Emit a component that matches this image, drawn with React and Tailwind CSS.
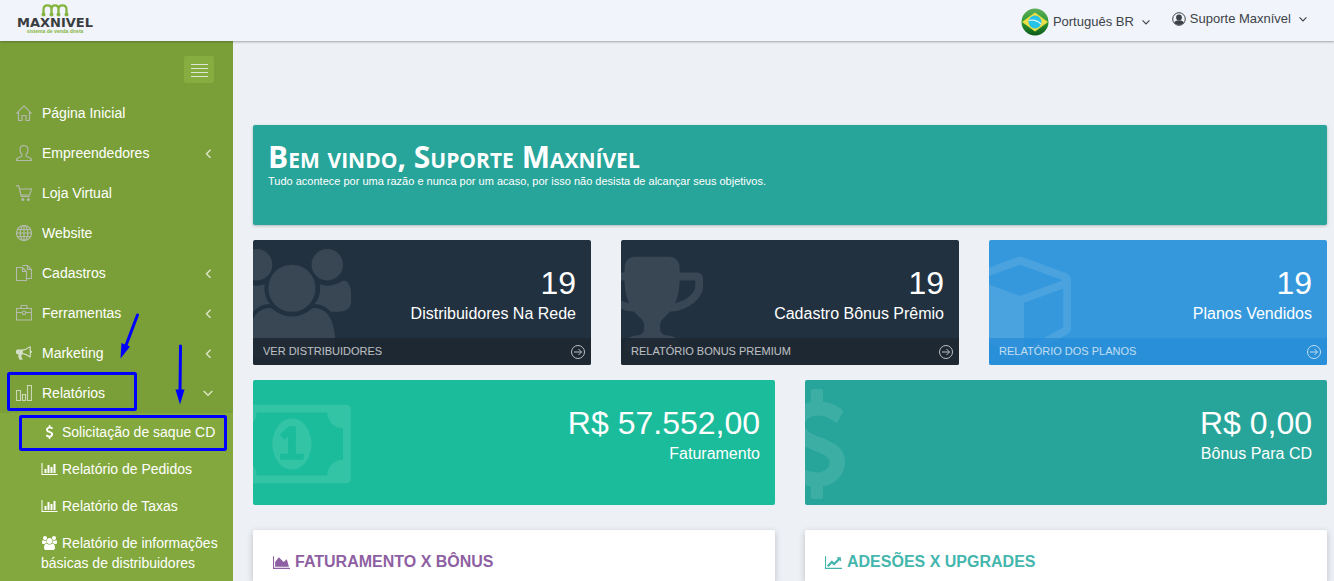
import React from 'react';

const FA_PATHS = {
  users: {
    box: '-64 0 1920 1792',
    d: 'M529 896q-162 5-265 128h-134q-82 0-138-40.5t-56-118.5q0-353 124-353 6 0 43.5 21t97.5 42.5 119 21.5q67 0 133-23-5 37-5 66 0 159 93 256zm1071 637q0 120-73 189.5t-194 69.5h-874q-121 0-194-69.5t-73-189.5q0-53 3.5-103.5t14-109 26.5-108.5 43-97.5 62-81 85.5-53.5 111.5-20q10 0 43 21.5t73 48 107 48 135 21.5 135-21.5 107-48 73-48 43-21.5q61 0 111.5 20t85.5 53.5 62 81 43 97.5 26.5 108.5 14 109 3.5 103.5zm-1024-1277q0 106-75 181t-181 75-181-75-75-181 75-181 181-75 181 75 75 181zm704 384q0 159-112.5 271.5t-271.5 112.5-271.5-112.5-112.5-271.5 112.5-271.5 271.5-112.5 271.5 112.5 112.5 271.5zm576 225q0 78-56 118.5t-138 40.5h-134q-103-123-265-128 93-97 93-256 0-29-5-66 66 23 133 23 59 0 119-21.5t97.5-42.5 43.5-21q124 0 124 353zm-128-609q0 106-75 181t-181 75-181-75-75-181 75-181 181-75 181 75 75 181z',
  },
  trophy: {
    box: '64 0 1664 1792',
    d: 'M522 883q-74-162-74-371h-256v96q0 78 94.5 162t235.5 113zm1078-275v-96h-256q0 209-74 371 141-29 235.5-113t94.5-162zm128-128v128q0 71-41.5 143t-112 130-173 97.5-215.5 44.5q-42 54-95 95-38 34-52.5 72.5t-14.5 89.5q0 54 30.5 91t97.5 37q75 0 133.5 45.5t58.5 114.5v64q0 14-9 23t-23 9h-832q-14 0-23-9t-9-23v-64q0-69 58.5-114.5t133.5-45.5q67 0 97.5-37t30.5-91q0-51-14.5-89.5t-52.5-72.5q-53-41-95-95-113-5-215.5-44.5t-173-97.5-112-130-41.5-143v-128q0-40 28-68t68-28h288v-96q0-66 47-113t113-47h576q66 0 113 47t47 113v96h288q40 0 68 28t28 68z',
  },
  cube: {
    box: '0 0 1664 1792',
    d: 'M896 1629l640-349v-636l-640 233v752zm-64-865l698-254-698-254-698 254zm832-252v768q0 35-18 65t-49 47l-704 384q-28 16-61 16t-61-16l-704-384q-31-17-49-47t-18-65v-768q0-40 23-73t61-47l704-256q22-8 44-8t44 8l704 256q38 14 61 47t23 73z',
  },
  money: {
    box: '0 0 1920 1792',
    d: 'M768 1152h384v-96h-128v-448h-114l-148 137 77 80q42-37 55-57h2v288h-128v96zm512-256q0 70-21 142t-59.5 134-101.5 101-138 39-138-39-101.5-101-59.5-134-21-142 21-142 59.5-134 101.5-101 138-39 138 39 101.5 101 59.5 134 21 142zm512 256v-512q-106 0-181-75t-75-181h-1152q0 106-75 181t-181 75v512q106 0 181 75t75 181h1152q0-106 75-181t181-75zm128-832v1152q0 26-19 45t-45 19h-1792q-26 0-45-19t-19-45v-1152q0-26 19-45t45-19h1792q26 0 45 19t19 45z',
  },
  dollar: {
    box: '384 0 1024 1792',
    d: 'M1362 1185q0 153-99.5 263.5t-258.5 136.5v175q0 14-9 23t-23 9h-135q-13 0-22.5-9.5t-9.5-22.5v-175q-66-9-127.5-31t-101.5-44.5-74-48-46.5-37.5-17.5-18q-17-21-2-41l103-135q7-10 23-12 15-2 24 9l2 2q113 99 243 125 37 8 74 8 81 0 142.5-43t61.5-122q0-28-15-53t-33.5-42-58.5-37.5-66-32-80-32.5q-39-16-61.5-25t-61.5-26.5-62.5-31-56.5-35.5-53.5-42.5-43.5-49-35.5-58-21-66.5-8.5-78q0-138 98-242t255-134v-180q0-13 9.5-22.5t22.5-9.5h135q14 0 23 9t9 23v176q57 6 110.5 23t87 33.5 63.5 37.5 39 29 15 14q17 18 5 38l-81 146q-8 15-23 16-14 3-27-7-3-3-14.5-12t-39-26.5-58.5-32-74.5-26-85.5-11.5q-95 0-155 43t-60 111q0 26 8.5 48t29.5 41.5 39.5 33 56 31 60.5 27 70 27.5q53 20 81 31.5t76 35 75.5 42.5 62 50 53 63.5 31.5 76.5 13 94z',
  },
  barChart: {
    box: '0 0 2048 1792',
    d: 'M640 896v512h-256v-512h256zm384-512v1024h-256v-1024h256zm1024 1152v128h-2048v-1536h128v1408h1920zm-640-896v768h-256v-768h256zm384-384v1152h-256v-1152h256z',
  },
  areaChart: {
    box: '0 0 2048 1792',
    d: 'M2048 1536v128h-2048v-1536h128v1408h1920zm-384-1024l256 896h-1664v-576l448-576 576 576z',
  },
  lineChart: {
    box: '0 0 2048 1792',
    d: 'M2048 1536v128h-2048v-1536h128v1408h1920zm-128-1248v435q0 21-19.5 29.5t-35.5-7.5l-121-121-633 633q-10 10-23 10t-23-10l-233-233-416 416-192-192 585-585q10-10 23-10t23 10l233 233 464-464-121-121q-16-16-7.5-35.5t29.5-19.5h435q14 0 23 9t9 23z',
  },
  bullhorn: {
    box: '0 0 1792 1792',
    d: 'M1664 640q53 0 90.5 37.5t37.5 90.5-37.5 90.5-90.5 37.5v384q0 52-38 90t-90 38q-417-347-812-380-58 19-91 66t-31 100.5 40 92.5q-20 33-23 65.5t6 58 33.5 55 48 50 61.5 50.5q-29 58-111.5 83t-168.5 11.5-132-55.5q-7-23-29.5-87.5t-32-94.5-23-89-15-101 3.5-98.5 22-110.5h-122q-66 0-113-47t-47-113v-192q0-66 47-113t113-47h480q435 0 896-384 52 0 90 38t38 90v384zm-128 604v-954q-394 302-768 343v270q377 42 768 341z',
  },
};

const FaIcon = ({ name, className }) => (
  <svg viewBox={FA_PATHS[name].box} className={className} fill="currentColor" aria-hidden="true">
    <path d={FA_PATHS[name].d} />
  </svg>
);

const LineIcon = ({ children, className = 'size-4 text-[#b4bbae]' }) => (
  <svg viewBox="0 0 16 16" className={className} fill="none" stroke="currentColor" strokeWidth="1.150" aria-hidden="true">
    {children}
  </svg>
);

const HomeIcon = () => (
  <LineIcon>
    <path d="M.4 8.600 8 .8l7.600 7.800M2.500 7v8.500h3.500V10.500h4v5h3.500V7" strokeLinejoin="round" />
  </LineIcon>
);

const UserIcon = () => (
  <LineIcon>
    <path d="M8 .5c-2.400 0-4 1.700-4 4.300 0 2 .6 3.500 1.900 4.600v1.300c0 .5-.3.8-.8 1L1.600 13c-.7.3-1.100 1-1.100 2.500h15c0-1.500-.4-2.200-1.100-2.500l-3.500-1.300c-.5-.2-.8-.5-.8-1V9.400C11.400 8.300 12 6.800 12 4.800 12 2.200 10.400.5 8 .5z" />
  </LineIcon>
);

const CartIcon = () => (
  <LineIcon>
    <path d="M0 .8h2.800l2.400 10.700h8.600M3.500 4h12l-1.800 6H5" />
    <g fill="currentColor" stroke="none">
      <circle cx="6.800" cy="14.400" r="1.500" />
      <circle cx="12.300" cy="14.400" r="1.500" />
    </g>
  </LineIcon>
);

const GlobeIcon = () => (
  <LineIcon>
    <circle cx="8" cy="8" r="7.500" />
    <ellipse cx="8" cy="8" rx="3.800" ry="7.500" />
    <path d="M8 .5v15M.5 8h15M1.500 4.500h13M1.500 11.500h13" />
  </LineIcon>
);

const DocsIcon = () => (
  <LineIcon>
    <path d="M6.500 2.500h-6v13h10V6.500zM6.500 2.500v4h4M6.500.5h5l4 4v9H10.500M11.500.5v4h4" />
  </LineIcon>
);

const BriefcaseIcon = () => (
  <LineIcon>
    <path d="M.5 3.500h15v11.500H.5zM5 3.500v-2c0-.6.4-1 1-1h4c.6 0 1 .4 1 1v2M.5 7.500H6M10 7.500h5.500" />
    <circle cx="8" cy="7.800" r="1.800" />
  </LineIcon>
);

const ChartIcon = () => (
  <LineIcon className="size-4 text-[#ccd6b8]">
    <path d="M.5 5.500h4v10h-4zM6.500 9.500h3v6h-3zM11.500.5h4v15h-4z" />
  </LineIcon>
);

const Chevron = ({ open, className }) => (
  <svg viewBox="0 0 10 10" className={className} fill="none" stroke="currentColor" strokeWidth="1.400" aria-hidden="true">
    <path d={open ? 'M.7 3 5 7.300 9.300 3' : 'M7.600 1.700 3.500 5.800l4.100 4.100'} />
  </svg>
);

const menu = [
  { label: 'Página Inicial', icon: <HomeIcon /> },
  { label: 'Empreendedores', icon: <UserIcon />, sub: true },
  { label: 'Loja Virtual', icon: <CartIcon /> },
  { label: 'Website', icon: <GlobeIcon /> },
  { label: 'Cadastros', icon: <DocsIcon />, sub: true },
  { label: 'Ferramentas', icon: <BriefcaseIcon />, sub: true },
  { label: 'Marketing', icon: <FaIcon name="bullhorn" className="size-4 text-[#d5dec8]" />, sub: true },
  { label: 'Relatórios', icon: <ChartIcon />, sub: true, open: true },
];

const reports = [
  { label: 'Solicitação de saque CD', icon: 'dollar' },
  { label: 'Relatório de Pedidos', icon: 'barChart' },
  { label: 'Relatório de Taxas', icon: 'barChart' },
  { label: 'Relatório de informações básicas de distribuidores', icon: 'users' },
];

const Logo = () => (
  <a href="#" className="flex w-[74px] flex-col items-center pt-1" aria-label="Maxnivel">
    <svg viewBox="0 0 28 13" className="h-[13px] w-[28px]" fill="none" stroke="#86b440" strokeWidth="2.300" aria-hidden="true">
      <path d="M2.500 11V5.500c0-2.600 1.500-4.200 4-4.200s4 1.600 4 4.200V11M10.500 5.500c0-2.600 1.200-4.200 3.500-4.200s3.500 1.600 3.500 4.200M17.500 11V5.500c0-2.600 1.500-4.200 4-4.200s4 1.600 4 4.200V11" />
      <g fill="#86b440" stroke="none">
        <circle cx="2.500" cy="10.600" r="2" />
        <circle cx="10.500" cy="10.600" r="2" />
        <circle cx="17.500" cy="10.600" r="2" />
        <circle cx="25.500" cy="10.600" r="2" />
      </g>
    </svg>
    <span className="font-['DejaVu_Sans'] text-[13px] leading-3 font-bold text-[#3a3d40]">MAXNIVEL</span>
    <span className="text-[5px] leading-[5px] font-bold text-[#86b440]">sistema de venda direta</span>
  </a>
);

const BrazilFlag = () => (
  <svg viewBox="0 0 28 28" className="size-7" aria-hidden="true">
    <defs>
      <linearGradient id="flagGreen" x1="0" y1="0" x2="0" y2="1">
        <stop offset="0" stopColor="#5fae5a" />
        <stop offset="0.5" stopColor="#2f9a35" />
        <stop offset="1" stopColor="#0c5a1a" />
      </linearGradient>
    </defs>
    <circle cx="14" cy="14" r="13.500" fill="url(#flagGreen)" />
    <path d="M14 4.500 27 14 14 23.500 1 14z" fill="#eddf45" />
    <circle cx="14" cy="14" r="6.500" fill="#27c3e6" />
    <path d="M7.800 12.500c4-1 9 .3 12.200 3.500" fill="none" stroke="#d8f5fb" strokeWidth="1.200" />
  </svg>
);

const Header = () => (
  <header className="relative z-10 flex h-[41px] items-start justify-between bg-[#f1f4fa] pr-[27px] pl-[18px] shadow-[0_1px_2px_rgba(50,50,50,0.4)]">
    <Logo />
    <div className="flex text-[13px] leading-5 text-[#3c4248]">
      <button className="mt-2 flex h-7 items-center gap-1">
        <BrazilFlag />
        <span>Português BR</span>
        <Chevron open className="ml-1 size-2" />
      </button>
      <button className="ml-[22px] flex h-[37px] items-center gap-1">
        <svg viewBox="0 0 14 14" className="size-[14px]" aria-hidden="true">
          <circle cx="7" cy="7" r="6.300" fill="none" stroke="currentColor" strokeWidth="1" />
          <circle cx="7" cy="5.400" r="2.900" fill="currentColor" />
          <path d="M2.200 11C2.600 9.300 4.200 8.300 7 8.300s4.400 1 4.800 2.700C10.500 12.300 8.800 12.900 7 12.900S3.500 12.300 2.200 11z" fill="currentColor" />
        </svg>
        <span>Suporte Maxnível</span>
        <Chevron open className="ml-1 size-2" />
      </button>
    </div>
  </header>
);

const Sidebar = () => (
  <aside className="flex w-[233px] shrink-0 flex-col bg-[#7a9f38]">
    <div className="flex justify-end pt-[15px] pr-[19px] pb-[10px]">
      <button aria-label="Menu" className="flex h-[27px] w-[30px] flex-col items-center justify-center gap-[3px] rounded-xs bg-[#86ad3f] pt-px">
        <span className="h-px w-[17px] bg-[#dfe4d8]" />
        <span className="h-px w-[17px] bg-[#dfe4d8]" />
        <span className="h-px w-[17px] bg-[#dfe4d8]" />
        <span className="h-px w-[17px] bg-[#dfe4d8]" />
      </button>
    </div>
    <nav className="flex flex-1 flex-col text-sm text-white">
      <ul>
        {menu.map((item) => (
          <li key={item.label}>
            <a href="#" className="flex h-10 items-center gap-[10px] pr-5 pl-4">
              {item.icon}
              <span className="flex-1">{item.label}</span>
              {item.sub && <Chevron open={item.open} className="size-[10px] text-[#dbe5c8]" />}
            </a>
          </li>
        ))}
      </ul>
      <ul className="flex flex-1 flex-col gap-px bg-[#83a93e] pt-px">
        {reports.map((item) => (
          <li key={item.label}>
            <a href="#" className="block py-2 pr-3 pl-[41px] leading-5">
              <FaIcon name={item.icon} className="mr-1 inline-block h-[14px] w-[17px] align-[-2px]" />
              {item.label}
            </a>
          </li>
        ))}
      </ul>
    </nav>
  </aside>
);

// highlight boxes and arrows drawn over the menu
const Highlights = () => (
  <svg className="pointer-events-none absolute top-0 left-0 z-20 h-[460px] w-[233px]" viewBox="0 0 233 460" fill="none" stroke="#0000ff" strokeWidth="3" aria-hidden="true">
    <rect x="8.500" y="373.500" width="127" height="36" rx="1" />
    <rect x="20.500" y="416.500" width="205" height="33" rx="1" />
    <path d="M137.500 315 125 348M180.500 346 180 394" strokeLinecap="round" />
    <path d="M120.500 358.500 121.500 343 130 346.500zM180 404.500 175.500 389.500h9z" fill="#0000ff" stroke="none" />
  </svg>
);

const StatCard = ({ icon, value, label, link, color, footer }) => (
  <div className={`relative flex h-[125px] flex-col justify-between overflow-hidden rounded-xs text-white ${color}`}>
    <FaIcon name={icon} className="absolute top-[9px] -left-5 h-[110px] w-auto opacity-10" />
    <div className="relative px-[15px] pt-[25px] text-right">
      <div className="text-[32px] leading-9">{value}</div>
      <div className="text-base leading-[26px]">{label}</div>
    </div>
    {link && (
      <a href="#" className={`relative flex h-[27px] items-center justify-between pr-[5px] pl-[10px] text-[11px] uppercase ${footer}`}>
        <span className="opacity-70">{link}</span>
        <svg viewBox="0 0 16 16" className="size-4 opacity-70" fill="none" stroke="currentColor" aria-hidden="true">
          <circle cx="8" cy="8" r="6.500" />
          <path d="M4 8h7.500M8.500 5l3 3-3 3" />
        </svg>
      </a>
    )}
  </div>
);

const Panel = ({ icon, title, color }) => (
  <section className="rounded-t-xs bg-white px-5 pt-5 shadow-[0_2px_6px_rgba(40,50,60,0.25)]">
    <h2 className={`flex items-center gap-[5px] text-base leading-6 font-bold uppercase ${color}`}>
      <FaIcon name={icon} className="h-[15px] w-[17px]" />
      {title}
    </h2>
  </section>
);

const App = () => {
  return (
    <div className="relative flex min-h-screen flex-col bg-[#edf0f5] font-['Liberation_Sans',Arial,sans-serif]">
      <Header />
      <div className="flex flex-1">
        <Sidebar />
        <main className="flex flex-1 flex-col pt-[84px] pr-[7px] pl-5">
          <section className="h-[100px] rounded-xs bg-[#27a59a] px-[15px] pt-4 text-white shadow-[0_1px_3px_rgba(0,0,0,0.25)]">
            <h1 className="font-['Open_Sans',sans-serif] text-[30px] leading-8 font-bold [font-variant:small-caps]">
              Bem vindo, Suporte Maxnível
            </h1>
            <p className="text-[11px] leading-4">
              Tudo acontece por uma razão e nunca por um acaso, por isso não desista de alcançar seus objetivos.
            </p>
          </section>

          <div className="mt-[15px] grid grid-cols-3 gap-[30px]">
            <StatCard icon="users" value="19" label="Distribuidores Na Rede" link="Ver Distribuidores" color="bg-[#22313f]" footer="bg-[#1d2731]/85" />
            <StatCard icon="trophy" value="19" label="Cadastro Bônus Prêmio" link="Relatório Bonus Premium" color="bg-[#22313f]" footer="bg-[#1d2731]/85" />
            <StatCard icon="cube" value="19" label="Planos Vendidos" link="Relatório dos Planos" color="bg-[#3598dc]" footer="bg-[#278dd7]/80" />
          </div>

          <div className="mt-[15px] grid grid-cols-2 gap-[30px]">
            <StatCard icon="money" value="R$ 57.552,00" label="Faturamento" color="bg-[#1bbc9b]" />
            <StatCard icon="dollar" value="R$ 0,00" label="Bônus Para CD" color="bg-[#27a59a]" />
          </div>

          <div className="mt-[25px] grid flex-1 grid-cols-2 gap-[30px]">
            <Panel icon="areaChart" title="Faturamento x Bônus" color="text-[#8e5fa2]" />
            <Panel icon="lineChart" title="Adesões x Upgrades" color="text-[#44b6ae]" />
          </div>
        </main>
      </div>
      <Highlights />
    </div>
  );
};

export default App;
